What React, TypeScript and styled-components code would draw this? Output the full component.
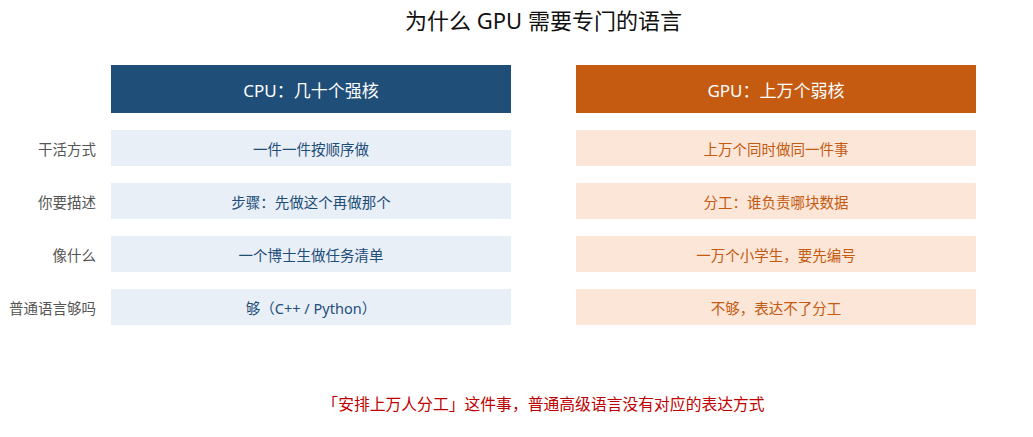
import React from 'react';
import styled, { createGlobalStyle } from 'styled-components';

type Side = 'cpu' | 'gpu';

const colors = {
    cpu: { strong: '#1f4e79', soft: '#e9eff7' },
    gpu: { strong: '#c55a11', soft: '#fbe6d8' },
};

const rows = [
    { label: '干活方式', cpu: '一件一件按顺序做', gpu: '上万个同时做同一件事' },
    { label: '你要描述', cpu: '步骤：先做这个再做那个', gpu: '分工：谁负责哪块数据' },
    { label: '像什么', cpu: '一个博士生做任务清单', gpu: '一万个小学生，要先编号' },
    { label: '普通语言够吗', cpu: '够（C++ / Python）', gpu: '不够，表达不了分工' },
];

const GlobalStyle = createGlobalStyle`
    body {
        margin: 0;
        background: #ffffff;
        font-family: "Noto Sans", "Noto Sans CJK SC", sans-serif;
    }
`;

const App: React.FC = () => (
    <>
        <GlobalStyle />
        <Page>
            <Title>为什么 GPU 需要专门的语言</Title>
            <Row>
                <Label />
                <Pair>
                    <HeadCell side="cpu">CPU：几十个强核</HeadCell>
                    <HeadCell side="gpu">GPU：上万个弱核</HeadCell>
                </Pair>
            </Row>
            {rows.map((r) => (
                <Row key={r.label}>
                    <Label>{r.label}</Label>
                    <Pair>
                        <Cell side="cpu">{r.cpu}</Cell>
                        <Cell side="gpu">{r.gpu}</Cell>
                    </Pair>
                </Row>
            ))}
            <Footer>「安排上万人分工」这件事，普通高级语言没有对应的表达方式</Footer>
        </Page>
    </>
);

export default App;

const Page = styled.div`
    width: 1033px;
    height: 437px;
    display: flex;
    flex-direction: column;
    gap: 17px;
`;

const Title = styled.h1`
    margin: 6px 0 14px 111px;
    width: 865px;
    font-size: 22px;
    font-weight: 400;
    line-height: 28px;
    color: #111111;
    text-align: center;
`;

const Row = styled.div`
    display: flex;
    align-items: stretch;
`;

const Label = styled.div`
    width: 96px;
    margin-right: 15px;
    display: flex;
    align-items: center;
    justify-content: flex-end;
    font-size: 14.5px;
    color: #555555;
`;

const Pair = styled.div`
    display: flex;
    gap: 65px;
`;

const HeadCell = styled.div<{ side: Side }>`
    width: 400px;
    height: 48px;
    display: flex;
    align-items: center;
    justify-content: center;
    background: ${({ side }) => colors[side].strong};
    color: #ffffff;
    font-size: 17px;
`;

const Cell = styled.div<{ side: Side }>`
    width: 400px;
    height: 36px;
    display: flex;
    align-items: center;
    justify-content: center;
    background: ${({ side }) => colors[side].soft};
    color: ${({ side }) => colors[side].strong};
    font-size: 14.5px;
`;

const Footer = styled.div`
    margin: 50px 0 0 111px;
    width: 865px;
    text-align: center;
    font-size: 15.8px;
    color: #c00000;
`;
